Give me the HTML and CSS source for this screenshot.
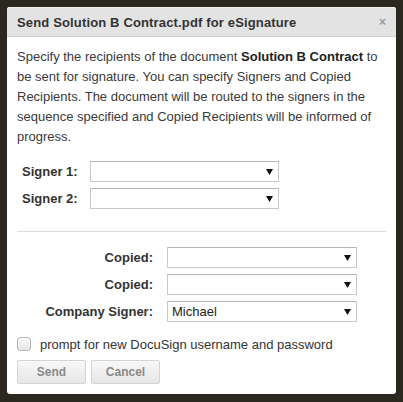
FILE: index.html
```html
<!DOCTYPE html>
<html>
<head>
<meta charset="utf-8">
<link rel="stylesheet" href="styles.css">
</head>
<body>
<div class="dialog">
  <div class="header">
    <span class="title">Send Solution B Contract.pdf for eSignature</span>
    <span class="close">&#215;</span>
  </div>
  <div class="content">
    <p class="intro">Specify the recipients of the document <b>Solution B Contract</b> to be sent for signature. You can specify Signers and Copied Recipients. The document will be routed to the signers in the sequence specified and Copied Recipients will be informed of progress.</p>
    <div class="signers">
      <label class="lbl">Signer 1:</label>
      <div class="select"><span class="val"></span><svg class="arrow" width="7" height="6" viewBox="0 0 7 6"><path d="M0 0H7L3.5 6Z" fill="#111"/></svg></div>
      <label class="lbl">Signer 2:</label>
      <div class="select"><span class="val"></span><svg class="arrow" width="7" height="6" viewBox="0 0 7 6"><path d="M0 0H7L3.5 6Z" fill="#111"/></svg></div>
    </div>
    <div class="rule"></div>
    <div class="copied">
      <label class="lbl r">Copied:</label>
      <div class="select"><span class="val"></span><svg class="arrow" width="7" height="6" viewBox="0 0 7 6"><path d="M0 0H7L3.5 6Z" fill="#111"/></svg></div>
      <label class="lbl r">Copied:</label>
      <div class="select"><span class="val"></span><svg class="arrow" width="7" height="6" viewBox="0 0 7 6"><path d="M0 0H7L3.5 6Z" fill="#111"/></svg></div>
      <label class="lbl r">Company Signer:</label>
      <div class="select"><span class="val">Michael</span><svg class="arrow" width="7" height="6" viewBox="0 0 7 6"><path d="M0 0H7L3.5 6Z" fill="#111"/></svg></div>
    </div>
    <div class="check">
      <span class="box"></span>
      <span class="ctext">prompt for new DocuSign username and password</span>
    </div>
    <div class="buttons">
      <button class="btn">Send</button>
      <button class="btn">Cancel</button>
    </div>
  </div>
</div>
</body>
</html>
```
FILE: styles.css
```css
html, body {
  margin: 0;
  padding: 0;
}
body {
  background: #2b2820;
  width: 403px;
  height: 402px;
  overflow: hidden;
  padding: 7px 7px 8px 7px;
  box-sizing: border-box;
  font-family: "Liberation Sans", Arial, sans-serif;
  color: #333;
}
.dialog {
  background: #fff;
  width: 389px;
  height: 387px;
  border-radius: 3px;
  overflow: hidden;
}
.header {
  background: #e3e3e3;
  border-top: 1px solid #f2f2f2;
  border-bottom: 1px solid #cfcfcf;
  height: 28px;
  display: flex;
  align-items: center;
  justify-content: space-between;
  padding: 0 10px;
}
.title {
  font-weight: bold;
  font-size: 13px;
  color: #333;
  letter-spacing: 0.15px;
}
.close {
  font-size: 12px;
  color: #9a9a9a;
  font-weight: bold;
}
.content {
  padding: 10px 10px 0 10px;
}
.intro {
  margin: 0;
  font-size: 13px;
  line-height: 20px;
  color: #3a3a3a;
}
.intro b {
  color: #222;
}
.signers {
  display: grid;
  grid-template-columns: 68px 189px;
  row-gap: 6px;
  align-items: center;
  margin-top: 14px;
  padding-left: 5px;
}
.lbl {
  font-weight: bold;
  font-size: 13px;
  color: #333;
}
.lbl.r {
  text-align: right;
  padding-right: 14px;
}
.select {
  height: 21px;
  box-sizing: border-box;
  border: 1px solid #c8c8c8;
  border-top-color: #b5b5b5;
  background: #fff;
  display: flex;
  align-items: center;
  justify-content: space-between;
  padding: 0 5px 0 4px;
  font-size: 13px;
  color: #222;
}
.rule {
  height: 1px;
  background: #dcdcdc;
  margin: 22px 0 15px 0;
}
.copied {
  display: grid;
  grid-template-columns: 150px 190px;
  row-gap: 6px;
  align-items: center;
}
.check {
  display: flex;
  align-items: center;
  margin-top: 15px;
  height: 14px;
}
.box {
  width: 12px;
  height: 12px;
  border: 1px solid #b8b8b8;
  border-radius: 3px;
  background: linear-gradient(#fafafa, #e6e6e6);
  margin-right: 9px;
}
.ctext {
  font-size: 13px;
  color: #333;
}
.buttons {
  display: flex;
  gap: 5px;
  margin-top: 9px;
}
.btn {
  width: 69px;
  height: 24px;
  border: 1px solid #d4d4d4;
  border-radius: 2px;
  background: linear-gradient(#f8f8f8, #e6e6e6);
  font-family: "Liberation Sans", Arial, sans-serif;
  font-weight: bold;
  font-size: 12px;
  color: #8a8a8a;
  padding: 0;
}
```
